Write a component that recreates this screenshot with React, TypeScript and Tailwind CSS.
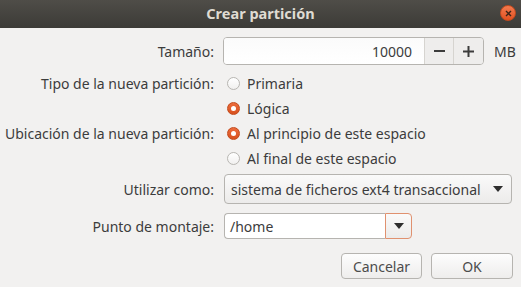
import { useState } from 'react';

type RadioProps = {
  label: string;
  checked: boolean;
  onSelect: () => void;
};

const Radio = ({ label, checked, onSelect }: RadioProps) => (
  <button onClick={onSelect} className="flex items-center gap-[7px] h-full text-left whitespace-nowrap">
    {checked ? (
      <span className="w-[13px] h-[13px] rounded-full bg-gradient-to-b from-[#ec6c3c] to-[#d8501c] border border-[#c24a1c] flex items-center justify-center">
        <span className="w-[5px] h-[5px] rounded-full bg-white" />
      </span>
    ) : (
      <span className="w-[13px] h-[13px] rounded-full bg-gradient-to-b from-white to-[#f1f0ef] border border-[#b8b6b2]" />
    )}
    <span>{label}</span>
  </button>
);

const Caret = () => (
  <svg width="10" height="6" viewBox="0 0 10 6" className="shrink-0">
    <path d="M0 0 L10 0 L5 6 Z" fill="#2e2e2e" />
  </svg>
);

export default function App() {
  const [size, setSize] = useState(10000);
  const [tipo, setTipo] = useState<'primaria' | 'logica'>('logica');
  const [pos, setPos] = useState<'inicio' | 'final'>('inicio');

  return (
    <div
      className="w-[521px] h-[287px] bg-[#f2f1f0] text-[#3c3c3c] text-[14px] overflow-hidden flex flex-col whitespace-nowrap"
      style={{ fontFamily: '"Noto Sans", "Open Sans", sans-serif' }}
    >
      {/* title bar */}
      <div className="h-[28px] shrink-0 bg-gradient-to-b from-[#4f4d48] to-[#3c3b37] flex items-center justify-center relative">
        <span className="font-bold text-[14.5px] text-[#dfdbd2]">Crear partición</span>
        <span className="absolute right-[5px] top-[5px] w-[16px] h-[16px] rounded-full bg-gradient-to-b from-[#f27a4e] to-[#e2501e] border border-[#c44a1e] flex items-center justify-center">
          <svg width="7" height="7" viewBox="0 0 7 7">
            <path d="M1 1 L6 6 M6 1 L1 6" stroke="#3a2418" strokeWidth="1.4" />
          </svg>
        </span>
      </div>

      {/* form */}
      <div className="grid grid-cols-[214px_1fr] gap-x-[9px] pt-[9px] pr-[8px]">
        <div className="h-[28px] flex items-center justify-end">Tamaño:</div>
        <div className="h-[28px] flex items-center">
          <div className="flex h-[28px] w-[261px] border border-[#b6b4b0] rounded-[4px] overflow-hidden">
            <div className="flex-1 bg-gradient-to-b from-[#fbfbfb] to-white flex items-center justify-end pr-[12px]">
              {size}
            </div>
            <button
              onClick={() => setSize(s => Math.max(0, s - 1))}
              className="w-[29px] border-l border-[#d6d4d0] bg-[#eeedec] flex items-center justify-center"
            >
              <svg width="11" height="2" viewBox="0 0 11 2"><rect width="11" height="2" fill="#3c3c3c" /></svg>
            </button>
            <button
              onClick={() => setSize(s => s + 1)}
              className="w-[30px] border-l border-[#d6d4d0] bg-[#eeedec] flex items-center justify-center"
            >
              <svg width="11" height="11" viewBox="0 0 11 11"><path d="M0 5.5 H11 M5.5 0 V11" stroke="#3c3c3c" strokeWidth="2" /></svg>
            </button>
          </div>
          <span className="ml-[10px]">MB</span>
        </div>

        <div className="h-[25px] mt-[6px] flex items-center justify-end">Tipo de la nueva partición:</div>
        <div className="h-[25px] mt-[6px] pl-[4px]">
          <Radio label="Primaria" checked={tipo === 'primaria'} onSelect={() => setTipo('primaria')} />
        </div>
        <div className="h-[25px]" />
        <div className="h-[25px] pl-[4px]">
          <Radio label="Lógica" checked={tipo === 'logica'} onSelect={() => setTipo('logica')} />
        </div>

        <div className="h-[25px] flex items-center justify-end">Ubicación de la nueva partición:</div>
        <div className="h-[25px] pl-[4px]">
          <Radio label="Al principio de este espacio" checked={pos === 'inicio'} onSelect={() => setPos('inicio')} />
        </div>
        <div className="h-[25px]" />
        <div className="h-[25px] pl-[4px]">
          <Radio label="Al final de este espacio" checked={pos === 'final'} onSelect={() => setPos('final')} />
        </div>

        <div className="h-[30px] mt-[3px] flex items-center justify-end">Utilizar como:</div>
        <div className="h-[30px] mt-[3px] pl-[1px]">
          <div className="h-[30px] w-[288px] border border-[#b6b4b0] rounded-[4px] bg-gradient-to-b from-[#fafafa] to-[#ecebea] flex items-center justify-between pl-[6px] pr-[8px]">
            <span>sistema de ficheros ext4 transaccional</span>
            <Caret />
          </div>
        </div>

        <div className="h-[26px] mt-[9px] flex items-center justify-end">Punto de montaje:</div>
        <div className="h-[26px] mt-[9px] pl-[1px]">
          <div className="h-[26px] w-[188px] flex">
            <div className="flex-1 border border-[#b6b4b0] border-r-0 rounded-l-[4px] bg-white flex items-center pl-[5px]">
              /home
            </div>
            <div className="w-[27px] border border-[#e0916f] rounded-r-[4px] bg-gradient-to-b from-[#fafafa] to-[#ecebea] flex items-center justify-center">
              <Caret />
            </div>
          </div>
        </div>
      </div>

      {/* buttons */}
      <div className="flex justify-end gap-[9px] pr-[8px] mt-[14px]">
        <button className="w-[81px] h-[26px] border border-[#b6b4b0] rounded-[4px] bg-gradient-to-b from-[#fdfdfd] to-[#eeedec] text-[#4c4c4c]">
          Cancelar
        </button>
        <button className="w-[82px] h-[26px] border border-[#b6b4b0] rounded-[4px] bg-gradient-to-b from-[#fdfdfd] to-[#eeedec] text-[#4c4c4c]">
          OK
        </button>
      </div>
    </div>
  );
}
